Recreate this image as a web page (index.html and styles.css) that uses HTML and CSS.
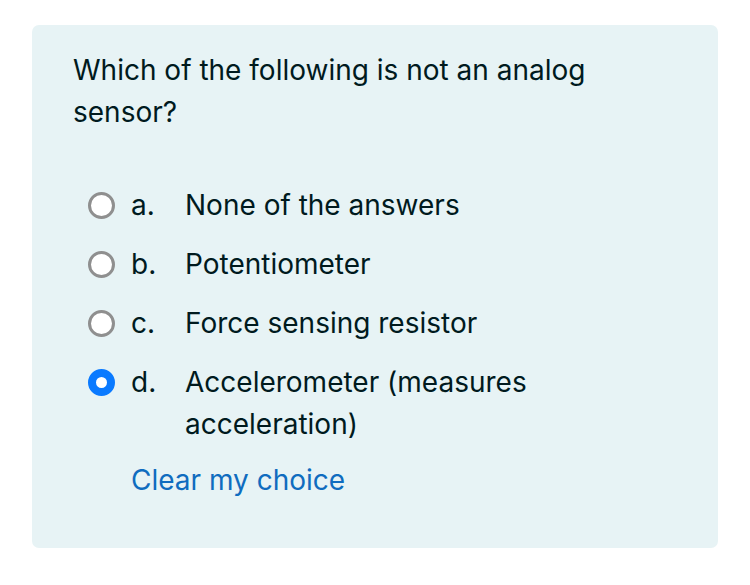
FILE: index.html
```html
<!DOCTYPE html>
<html>
<head>
<meta charset="utf-8">
<link rel="stylesheet" href="styles.css">
</head>
<body>
<div class="card">
  <div class="question">Which of the following is not an analog sensor?</div>
  <div class="answers">
    <label class="opt"><span class="radio"></span><span class="letter">a.</span><span class="text">None of the answers</span></label>
    <label class="opt"><span class="radio"></span><span class="letter">b.</span><span class="text">Potentiometer</span></label>
    <label class="opt"><span class="radio"></span><span class="letter">c.</span><span class="text">Force sensing resistor</span></label>
    <label class="opt"><span class="radio checked"></span><span class="letter">d.</span><span class="text">Accelerometer (measures acceleration)</span></label>
  </div>
  <a class="clear" href="#">Clear my choice</a>
</div>
</body>
</html>
```
FILE: styles.css
```css
html, body {
  margin: 0;
  padding: 0;
  background: #ffffff;
}
body {
  padding: 25px 32px 0 32px;
  font-family: Inter, "Noto Sans", sans-serif;
  font-size: 28px;
  line-height: 42px;
  color: #001a1e;
}
.card {
  width: 686px;
  box-sizing: border-box;
  background: #e7f3f5;
  border-radius: 7px;
  padding: 24px 41px 47px 41px;
}
.question {
  width: 540px;
}
.answers {
  margin-top: 51px;
  padding-left: 15px;
  display: flex;
  flex-direction: column;
  gap: 17px;
}
.opt {
  display: flex;
  align-items: flex-start;
}
.radio {
  flex: none;
  width: 27px;
  height: 27px;
  box-sizing: border-box;
  border: 3px solid #8f8f8f;
  border-radius: 50%;
  background: #ffffff;
  margin-top: 8px;
}
.radio.checked {
  border: 8px solid #0a7aff;
}
.letter {
  flex: none;
  width: 54px;
  margin-left: 16px;
}
.text {
  width: 370px;
}
.clear {
  display: block;
  margin-top: 14px;
  margin-left: 58px;
  color: #0f6cbf;
  text-decoration: none;
}
```
